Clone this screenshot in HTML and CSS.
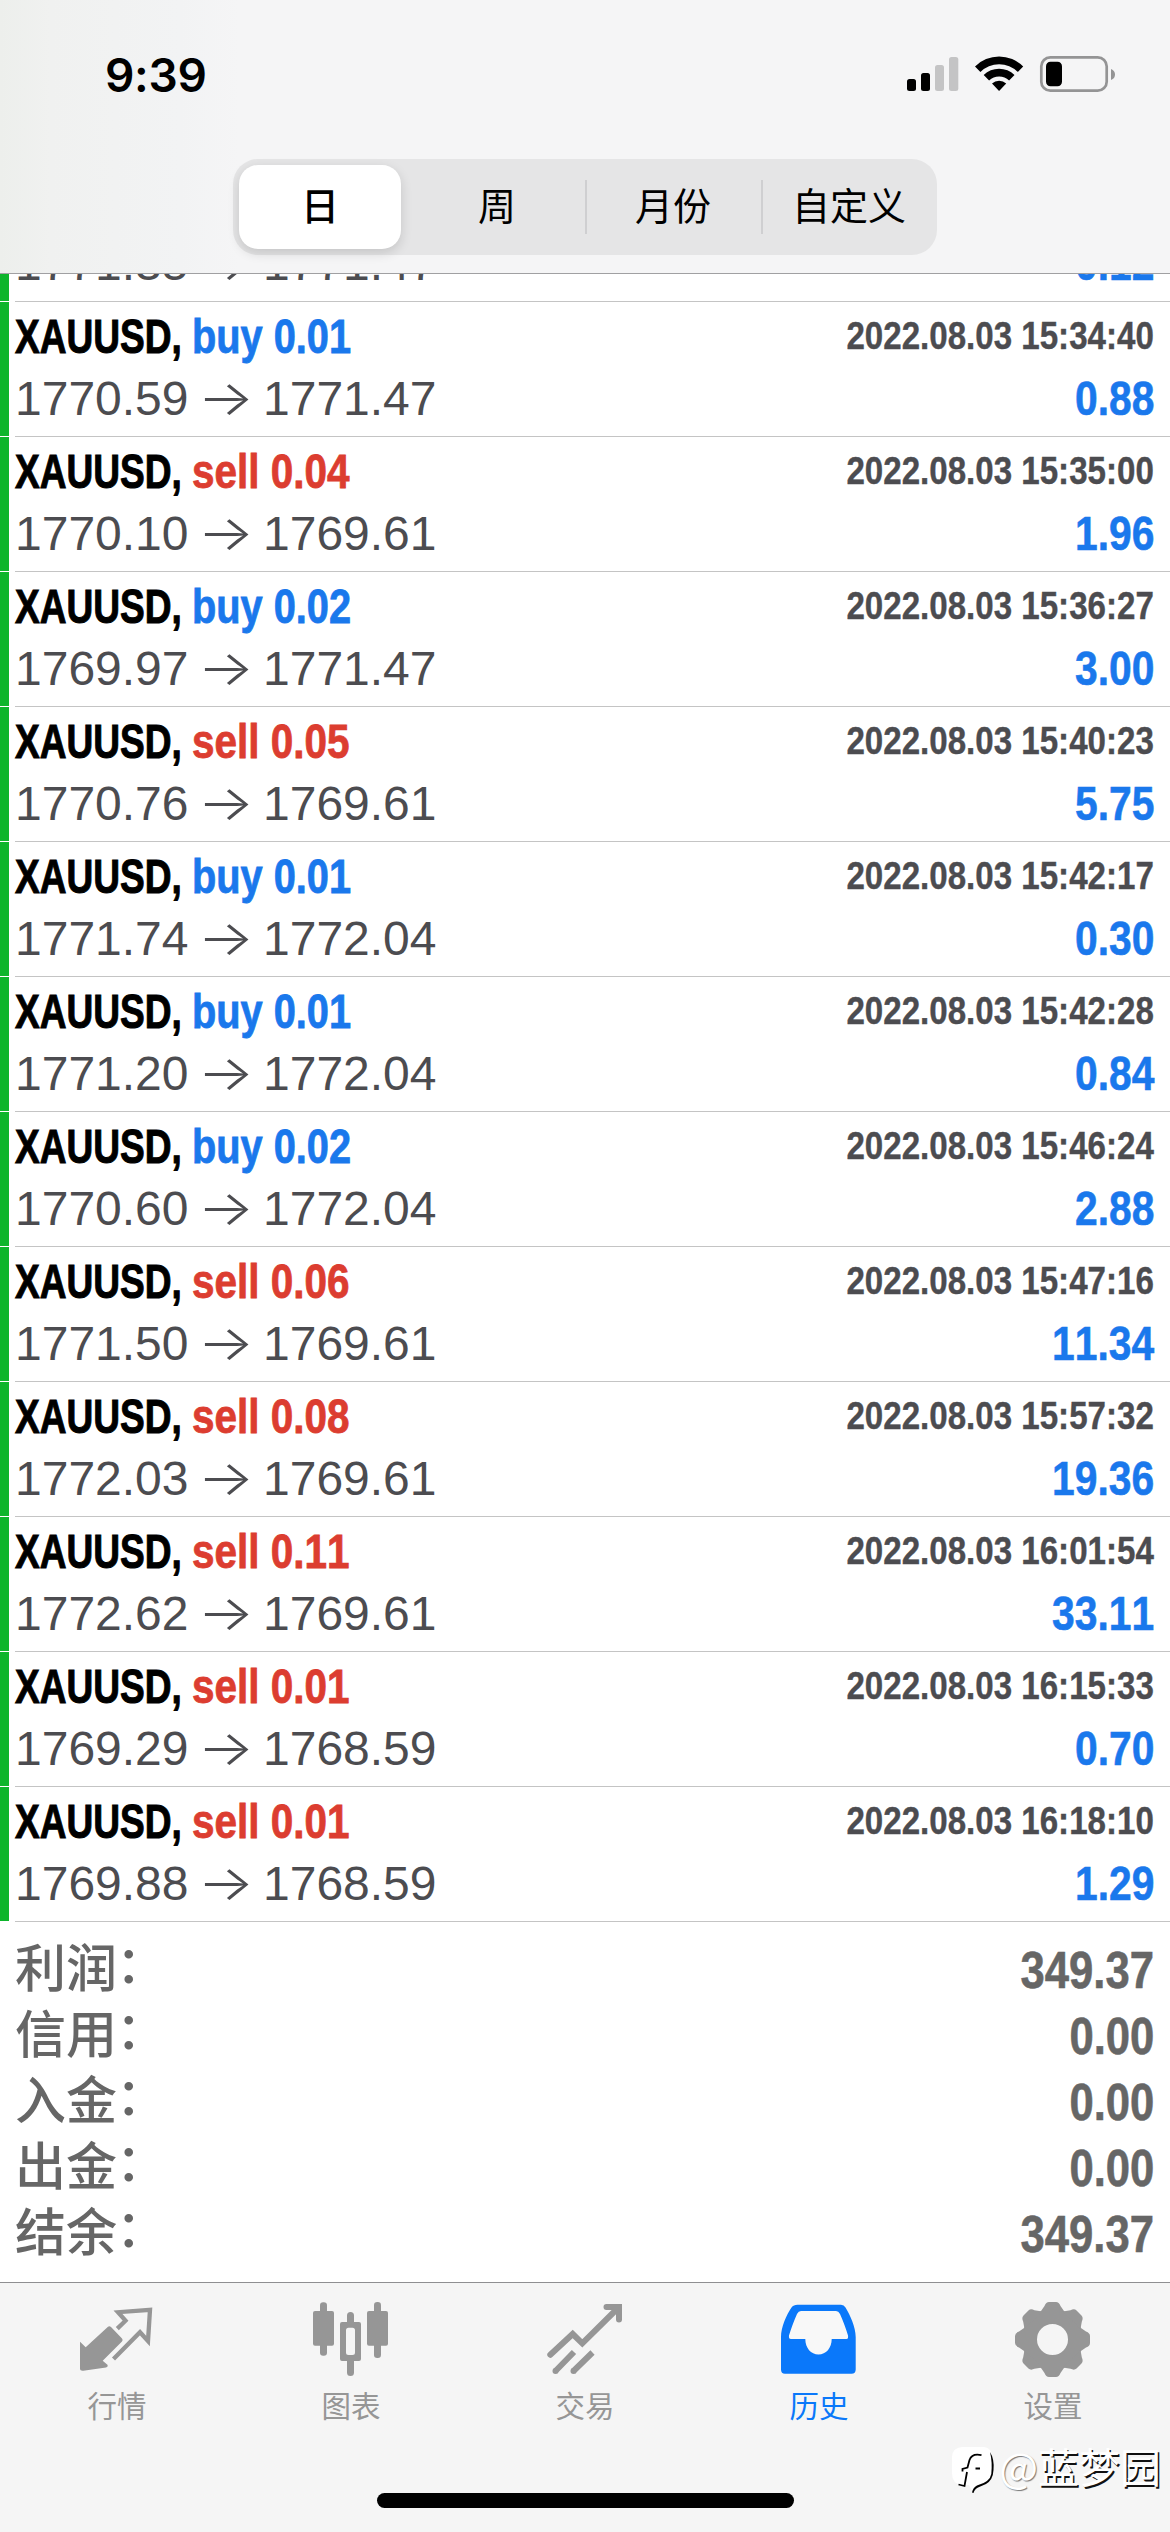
FILE: index.html
```html
<!DOCTYPE html>
<html lang="zh-CN">
<head>
<meta charset="utf-8">
<title>历史</title>
<link rel="stylesheet" href="styles.css">
</head>
<body>
<div class="screen">
  <header class="header">
    <div class="status">
      <span class="time">9:39</span>
      <svg class="status-icons" width="210" height="40" viewBox="0 0 210 40">
        <rect x="2" y="26" width="9" height="12" rx="2.5"/>
        <rect x="16" y="20" width="9" height="18" rx="2.5"/>
        <rect x="30" y="12" width="9" height="26" rx="2.5" fill="#c4c4c5"/>
        <rect x="44" y="4" width="9.300" height="34" rx="2.500" fill="#c4c4c5"/>
        <path d="M70 13.500a34 34 0 0 1 48.200 0l-5.400 5.400a26.500 26.500 0 0 0-37.400 0z"/>
        <path d="M78.700 22a22 22 0 0 1 30.800 0l-5.400 5.400a14.500 14.500 0 0 0-20 0z"/>
        <path d="M87 30.500a10.500 10.500 0 0 1 14.200 0L94.100 38z"/>
        <rect x="136.300" y="4.300" width="65.400" height="33.400" rx="9" fill="none" stroke="#949495" stroke-width="2.700"/>
        <rect x="141" y="8.700" width="16" height="24.500" rx="4.500"/>
        <path d="M206 16q4 1.500 4 5.500t-4 5.500z" fill="#949495"/>
      </svg>
    </div>
    <nav class="segments">
      <span class="segment"><b class="pill">日</b></span>
      <span class="segment">周</span>
      <span class="segment divided">月份</span>
      <span class="segment divided">自定义</span>
    </nav>
  </header>

  <main class="deals" id="deals"></main>

  <section class="totals">
    <div class="total"><span>利润<i class="colon">：</i></span><span class="sum">349.37</span></div>
    <div class="total"><span>信用<i class="colon">：</i></span><span class="sum">0.00</span></div>
    <div class="total"><span>入金<i class="colon">：</i></span><span class="sum">0.00</span></div>
    <div class="total"><span>出金<i class="colon">：</i></span><span class="sum">0.00</span></div>
    <div class="total"><span>结余<i class="colon">：</i></span><span class="sum">349.37</span></div>
  </section>

  <footer class="footer">
    <nav class="tabs">
      <a class="tab">
        <svg width="80" height="84" viewBox="0 0 80 84">
          <path fill="currentColor" d="M3 45.700L8.700 51.300 31 30.700Q32.500 29.500 34 31L45 42.500Q46.300 44 45 45.500L25.700 64.700 30.700 69Q31 71 29 71.500L6.300 74.700Q3 75 3 72.500z"/>
          <path fill="none" stroke="currentColor" stroke-width="4.300" d="M40.300 32.600L48.500 24.700 41 16.200 73 13.800 71 45 63 36.200 36.500 63"/>
        </svg>
        <span>行情</span>
      </a>
      <a class="tab">
        <svg width="80" height="84" viewBox="0 0 80 84" fill="currentColor">
          <rect x="2" y="15" width="21" height="34.700" rx="2"/><rect x="9" y="6.300" width="7" height="53.500" rx="3.200"/>
          <path fill-rule="evenodd" d="M31 26H48a2 2 0 0 1 2 2V63a2 2 0 0 1-2 2H31a2 2 0 0 1-2-2V28a2 2 0 0 1 2-2zM37.500 31.700A2.500 2.500 0 0 0 35 34.200V56.500A2.500 2.500 0 0 0 37.500 59H41.500A2.500 2.500 0 0 0 44 56.500V34.200A2.500 2.500 0 0 0 41.500 31.700z"/>
          <path d="M36 27V19.500a3.500 3.500 0 0 1 7 0V27zM36 64V76.500a3.500 3.500 0 0 0 7 0V64z"/>
          <rect x="56" y="15" width="21" height="34.700" rx="2"/><rect x="63" y="6" width="7" height="56" rx="3.200"/>
        </svg>
        <span>图表</span>
      </a>
      <a class="tab">
        <svg width="80" height="84" viewBox="0 0 80 84" fill="none" stroke="currentColor" stroke-width="6">
          <path stroke-linecap="round" d="M5.300 58.800L27.700 38 37.300 47.300 73 12M61.500 11H74V23.500"/>
          <path d="M10 75.500L29 56M28 75.500L47.500 56.500"/>
          <g fill="currentColor" stroke="none"><circle cx="10.500" cy="75" r="3"/><circle cx="28.500" cy="75" r="3"/></g>
        </svg>
        <span>交易</span>
      </a>
      <a class="tab active">
        <svg width="80" height="84" viewBox="0 0 80 84">
          <path fill="currentColor" d="M18.500 8.700H62Q65 8.700 66.500 11.500C71 19 76.700 31 76.700 41V73.500Q76.700 77.700 72.500 77.700H6Q2 77.700 2 73.500V41C2 31 7.500 19 12.500 11.500Q14.500 8.700 18.500 8.700z"/>
          <path fill="#f8f8f8" d="M22 15H57Q59.500 15 61 18C64 24.500 67 33 69 39.500Q69.500 43 67.500 43H52.700C52.700 52 47 58.500 39.500 58.500S26.300 52 26.300 43H12Q9.500 43 10 39.500C12 33 15 24.500 18 18Q19.500 15 22 15z"/>
        </svg>
        <span>历史</span>
      </a>
      <a class="tab">
        <svg width="80" height="84" viewBox="0 0 80 84">
          <defs><path id="tooth" d="M-12.500 -27L-8 -33.500Q-6.500 -37.500-3.500 -37.500H3.500Q6.500 -37.500 8 -33.500L12.500 -27z"/></defs>
          <g transform="translate(39.500 43.500)" fill="currentColor">
            <circle r="23" fill="none" stroke="currentColor" stroke-width="15"/>
            <use href="#tooth"/><use href="#tooth" transform="rotate(45)"/><use href="#tooth" transform="rotate(90)"/><use href="#tooth" transform="rotate(135)"/><use href="#tooth" transform="rotate(180)"/><use href="#tooth" transform="rotate(225)"/><use href="#tooth" transform="rotate(270)"/><use href="#tooth" transform="rotate(315)"/>
          </g>
        </svg>
        <span>设置</span>
      </a>
    </nav>
    <div class="home-bar"></div>
    <div class="signature">
      <svg width="44" height="50" viewBox="0 0 44 50">
        <path fill="#fff" d="M10 0H32Q40 1 40 10V28Q38 36 28 37Q22 39 20 44L17 38H10Q0 37 0 26V10Q0 1 10 0z"/>
        <path d="M38 5Q42.500 12 41.500 23Q41 33 34 37L26 40.500Q22.500 42 21.500 46L20 45.500Q21 40.500 25 38.500Q38 35 39.300 27Q40.500 15 38 5z"/>
        <path fill="none" stroke="#000" stroke-width="1.800" d="M29.500 8.200Q20 6 17.500 13L15.500 20.500 10.500 22V24.500M15 25L12.500 39 6.500 37.500M23.500 21.500H28"/>
      </svg>
      <span class="author"><i class="at">@</i>蓝梦园</span>
    </div>
  </footer>
</div>
<script src="deals.js"></script>
</body>
</html>
```
FILE: deals.js
```js
const deals = [
  ["buy", "0.01", "1771.35", "1771.47", "2022.08.03 15:34:10", "0.12"],
  ["buy", "0.01", "1770.59", "1771.47", "2022.08.03 15:34:40", "0.88"],
  ["sell", "0.04", "1770.10", "1769.61", "2022.08.03 15:35:00", "1.96"],
  ["buy", "0.02", "1769.97", "1771.47", "2022.08.03 15:36:27", "3.00"],
  ["sell", "0.05", "1770.76", "1769.61", "2022.08.03 15:40:23", "5.75"],
  ["buy", "0.01", "1771.74", "1772.04", "2022.08.03 15:42:17", "0.30"],
  ["buy", "0.01", "1771.20", "1772.04", "2022.08.03 15:42:28", "0.84"],
  ["buy", "0.02", "1770.60", "1772.04", "2022.08.03 15:46:24", "2.88"],
  ["sell", "0.06", "1771.50", "1769.61", "2022.08.03 15:47:16", "11.34"],
  ["sell", "0.08", "1772.03", "1769.61", "2022.08.03 15:57:32", "19.36"],
  ["sell", "0.11", "1772.62", "1769.61", "2022.08.03 16:01:54", "33.11"],
  ["sell", "0.01", "1769.29", "1768.59", "2022.08.03 16:15:33", "0.70"],
  ["sell", "0.01", "1769.88", "1768.59", "2022.08.03 16:18:10", "1.29"]
];

document.getElementById("deals").innerHTML = deals.map(([side, lots, open, close, time, profit], i) => `
  <article class="deal">
    <div class="line">${i === 0 ? "" : `
      <span class="symbol">XAUUSD,</span>
      <span class="side ${side}">${side} ${lots}</span>
      <span class="date">${time}</span>`}
    </div>
    <div class="line">
      <span class="price">${open}</span><span class="arrow">→</span><span class="price">${close}</span>
      <span class="profit">${profit}</span>
    </div>
  </article>`).join("");
```
FILE: styles.css
```css
* { box-sizing: border-box; }

body {
  margin: 0;
  background: #fff;
  font-family: "Liberation Sans", "Noto Sans CJK SC", sans-serif;
}

i { font-style: normal; }

.screen {
  width: 1170px;
  height: 2532px;
  display: flex;
  flex-direction: column;
  overflow: hidden;
}

/* Header */
.header {
  height: 274px;
  flex: none;
  border-bottom: 1px solid #a0a0a2;
  background: linear-gradient(90deg, #edefec 0, #f0f1f0 50px, #f2f3f4 180px, #f5f5f6 240px, #f5f5f6 100%);
}

.status {
  height: 159px;
  padding: 53px 55px 0 105px;
  display: flex;
  justify-content: space-between;
  align-items: flex-start;
}

.time {
  font: 600 46px/44px Inter, sans-serif;
  letter-spacing: -0.3px;
}

.segments {
  width: 704px;
  height: 96px;
  margin: 0 auto;
  display: grid;
  grid-template-columns: repeat(4, 1fr);
  border-radius: 25px;
  background: #e5e5e6;
}

.segment {
  display: flex;
  align-items: center;
  justify-content: center;
  font-size: 38px;
  line-height: 50px;
}

.divided::before {
  content: "";
  width: 2px;
  height: 54px;
  margin-right: auto;
  background: #cfcfd1;
}

.divided::after {
  content: "";
  width: 2px;
  margin-left: auto;
}

.pill {
  width: 162px;
  height: 84px;
  margin-right: 2px;
  border-radius: 19px;
  background: #fff;
  box-shadow: 0 4px 12px rgba(0, 0, 0, .14);
  font-weight: 500;
  line-height: 84px;
  text-align: center;
}

/* Deals */
.deals {
  height: 1648px;
  flex: none;
  display: flex;
  flex-direction: column;
  justify-content: flex-end;
  overflow: hidden;
}

.deal {
  height: 135px;
  flex: none;
  padding: 8px 16px 0 15px;
  display: flex;
  flex-direction: column;
  gap: 8px;
  background:
    linear-gradient(#c4c4c4, #c4c4c4) 15px 134px / 1155px 1px no-repeat,
    linear-gradient(#0db52b, #0db52b) 0 0 / 9px 134px no-repeat;
}

.line {
  height: 54px;
  display: flex;
  align-items: flex-start;
  font-size: 48px;
  line-height: 54px;
  white-space: nowrap;
}

.symbol,
.side,
.date,
.profit,
.sum {
  font-weight: 700;
  font-kerning: none;
}

.symbol {
  width: 177px;
  color: #000;
  transform: scaleX(.772);
  transform-origin: 0 0;
  -webkit-text-stroke: 1px;
}

.side {
  transform-origin: 0 0;
  -webkit-text-stroke: .8px;
}

.buy { color: #1a78ec; transform: scaleX(.828); }
.sell { color: #dc3d30; transform: scaleX(.843); }

.date {
  margin-left: auto;
  font-size: 39.5px;
  line-height: 50px;
  color: #4c4c50;
  transform: scaleX(.838);
  transform-origin: 100% 0;
  -webkit-text-stroke: .4px;
}

.price {
  width: 174px;
  font-size: 48px;
  color: #4c4c50;
}

.arrow {
  width: 74px;
  text-align: center;
  font-family: Inter, sans-serif;
  font-weight: 300;
  line-height: 52px;
  color: #4c4c50;
  transform: scaleX(1.24);
}

.profit {
  margin-left: auto;
  color: #1a78ec;
  transform: scaleX(.85);
  transform-origin: 100% 0;
  -webkit-text-stroke: .6px;
}

/* Totals */
.totals {
  height: 360px;
  flex: none;
  padding: 15px 16px 0 15px;
  color: #666;
}

.total {
  height: 66px;
  display: flex;
  justify-content: space-between;
  font-size: 51px;
  font-weight: 500;
  line-height: 66px;
}

.colon {
  display: inline-block;
  line-height: 1;
  transform: translate(-1px, -4px);
}

.sum {
  line-height: 68px;
  transform: scaleX(.855);
  transform-origin: 100% 0;
  -webkit-text-stroke: .6px;
}

/* Footer */
.footer {
  position: relative;
  flex: 1;
  border-top: 1px solid #8f8f91;
  background: #f5f5f5;
}

.tabs {
  height: 210px;
  padding-top: 13px;
  display: grid;
  grid-template-columns: repeat(5, 1fr);
}

.tab {
  display: flex;
  flex-direction: column;
  align-items: center;
  color: #969696;
  font-size: 29.5px;
  line-height: 40px;
}

.tab svg { margin-bottom: 7px; }
.active { color: #0a78fa; }

.home-bar {
  width: 417px;
  height: 15px;
  margin: 0 auto;
  border-radius: 8px;
  background: #000;
}

.signature {
  position: absolute;
  right: 9px;
  top: 164px;
  display: flex;
  align-items: flex-start;
  gap: 3px;
}

.author {
  color: #fff;
  font: 400 41px/36px "Noto Sans CJK SC", sans-serif;
  text-shadow: 1.500px 1.500px 0 #111;
}

.at { text-shadow: 1px 1px 1px #777; }
```
